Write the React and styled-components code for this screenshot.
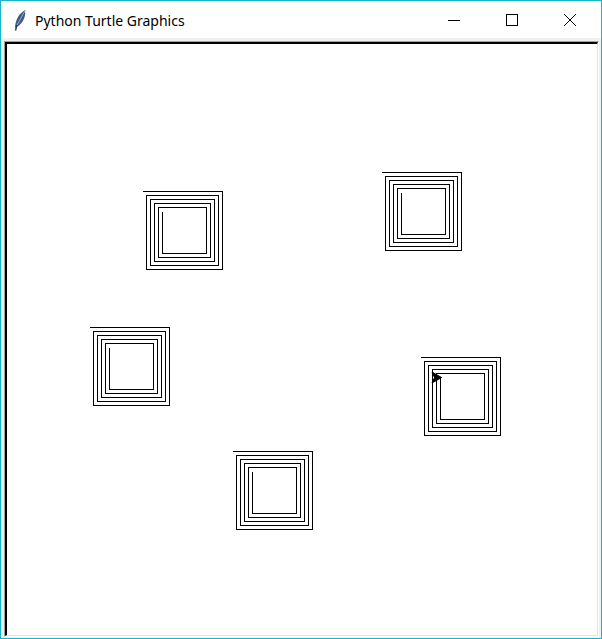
import * as React from 'react';
import styled, { createGlobalStyle } from 'styled-components';

const GlobalStyle = createGlobalStyle`
  html, body {
    margin: 0;
    padding: 0;
    background: #ffffff;
  }
`

// top-left end of the last stroke of each spiral
const spirals = [
  { x: 142, y: 191 },
  { x: 381, y: 172 },
  { x: 89, y: 327 },
  { x: 420, y: 357 },
  { x: 232, y: 451 },
]

function spiralPoints(x0, y0) {
  let x = x0 + 20
  let y = y0 + 20
  const pts = [[x, y]]
  const dirs = [[0, 1], [1, 0], [0, -1], [-1, 0]]
  for (let i = 0; i < 20; i++) {
    const len = 42 + i * 2
    const [dx, dy] = dirs[i % 4]
    x += dx * len
    y += dy * len
    pts.push([x, y])
  }
  return pts.map(p => `${p[0] + 0.5},${p[1] + 0.5}`).join(' ')
}

export default function App() {
  return (
    <>
      <GlobalStyle />
      <Window>
        <TitleBar>
          <TitleLeft>
            <Feather />
            <TitleText>Python Turtle Graphics</TitleText>
          </TitleLeft>
          <Controls>
            <CtrlButton aria-label="minimize">
              <svg width="12" height="12" viewBox="0 0 12 12">
                <line x1="0" y1="6.5" x2="12" y2="6.5" stroke="#000" strokeWidth="1" />
              </svg>
            </CtrlButton>
            <CtrlButton aria-label="maximize">
              <svg width="12" height="12" viewBox="0 0 12 12">
                <rect x="0.5" y="0.5" width="11" height="11" fill="none" stroke="#000" strokeWidth="1" />
              </svg>
            </CtrlButton>
            <CtrlButton aria-label="close">
              <svg width="12" height="12" viewBox="0 0 12 12">
                <path d="M0 0 L12 12 M12 0 L0 12" stroke="#000" strokeWidth="1" />
              </svg>
            </CtrlButton>
          </Controls>
        </TitleBar>
        <Body>
          <CanvasFrame>
            <CanvasInner>
              <svg width="590" height="591" viewBox="7 44 590 591">
                {spirals.map((s, i) => (
                  <polyline
                    key={i}
                    points={spiralPoints(s.x, s.y)}
                    fill="none"
                    stroke="#000"
                    strokeWidth="1"
                    shapeRendering="crispEdges"
                  />
                ))}
                <polygon points="441.5,377.5 432,372 434.5,377.5 432,383" fill="#000" stroke="#000" strokeWidth="1" />
              </svg>
            </CanvasInner>
          </CanvasFrame>
        </Body>
      </Window>
    </>
  )
}

function Feather() {
  return (
    <svg width="12" height="22" viewBox="0 0 12 22">
      <path d="M1 19 C1 13 4 5 11 1 C12 6 10 12 5 16.5 Z" fill="#3b5a85" />
      <path d="M11 1.5 C8 7 6 11 3 16" stroke="#9cb3cf" strokeWidth="1" fill="none" />
      <path d="M3 16 L1.5 21.5" stroke="#2b3d57" strokeWidth="1.4" />
    </svg>
  )
}

const Window = styled.div`
  width: 602px;
  height: 639px;
  box-sizing: border-box;
  border: 1px solid #17b6c8;
  display: flex;
  flex-direction: column;
  background: #f0f0f0;
`

const TitleBar = styled.div`
  height: 37px;
  flex: none;
  background: #ffffff;
  display: flex;
  align-items: center;
  justify-content: space-between;
`

const TitleLeft = styled.div`
  display: flex;
  align-items: center;
  gap: 9px;
  padding-left: 13px;
`

const TitleText = styled.span`
  font-family: "Noto Sans", "Open Sans", sans-serif;
  font-size: 14px;
  color: #000000;
  padding-top: 1px;
`

const Controls = styled.div`
  display: flex;
  align-self: stretch;
  margin-right: 2px;
`

const CtrlButton = styled.div`
  width: 58px;
  display: flex;
  align-items: center;
  justify-content: center;
  padding-top: 1px;
`

const Body = styled.div`
  flex: 1;
  display: flex;
  padding: 3px 2px 1px 3px;
`

const CanvasFrame = styled.div`
  flex: 1;
  display: flex;
  border-top: 1px solid #a0a0a0;
  border-left: 1px solid #a0a0a0;
  border-right: 1px solid #ffffff;
  border-bottom: 1px solid #ffffff;
`

const CanvasInner = styled.div`
  flex: 1;
  display: flex;
  overflow: hidden;
  background: #ffffff;
  border-top: 2px solid #000000;
  border-left: 2px solid #000000;
  border-right: 1px solid #e3e3e3;
  border-bottom: 1px solid #e3e3e3;
`
